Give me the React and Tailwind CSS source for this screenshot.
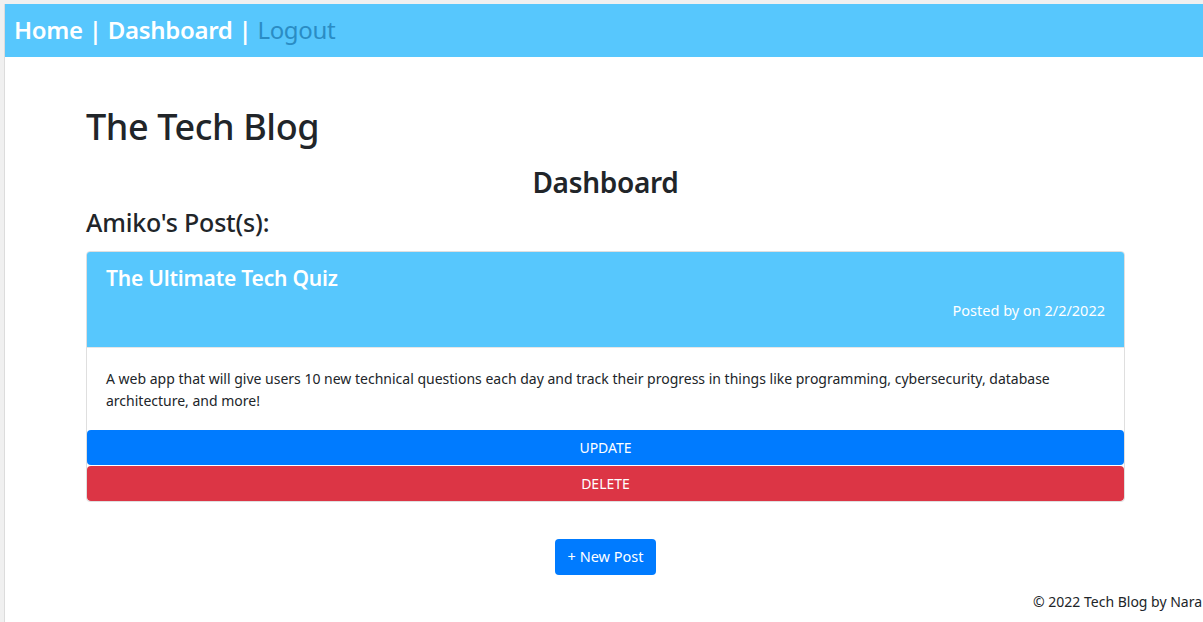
export default function App() {
  return (
    <div className="h-[622px] w-[1203px] overflow-hidden bg-[#f0f0f0] pt-[4px] pl-[4px] font-['Noto_Sans','Open_Sans',sans-serif] text-[#212529]">
      <div className="h-full bg-white border-l border-[#dcdcdc]">
        {/* Top nav */}
        <header className="h-[53px] bg-[#57c7fd] flex items-center pl-[9px] pb-[2px]">
          <nav className="text-[24px] font-semibold text-white leading-none tracking-[-0.3px]">
            <a href="#">Home</a> | <a href="#">Dashboard</a> |{' '}
            <a href="#" className="font-normal text-[#2a8cc4]">Logout</a>
          </nav>
        </header>

        <main className="ml-[81px] w-[1039px]">
          <h1 className="mt-[48px] text-[36px] font-medium leading-[44px] tracking-[-0.4px]">The Tech Blog</h1>
          <h2 className="mt-[15px] text-center text-[28px] font-semibold leading-[36px] tracking-[-0.3px]">Dashboard</h2>
          <h3 className="mt-[7px] text-[25px] font-medium leading-[30px] tracking-[-0.2px]">Amiko's Post(s):</h3>

          {/* Post card */}
          <div className="mt-[14px] border border-[#dfdfdf] rounded-[4px] overflow-hidden">
            <div className="h-[95px] bg-[#57c7fd] px-[19px] pt-[11px] text-white">
              <h4 className="text-[21px] font-semibold leading-[30px] tracking-[-0.2px]">The Ultimate Tech Quiz</h4>
              <p className="mt-[7px] text-right text-[14.5px] leading-[20px]">Posted by on 2/2/2022</p>
            </div>
            <div className="px-[19px] pt-[20px] pb-[18px] text-[14px] leading-[22px] border-t border-[#e6e6e6]">
              A web app that will give users 10 new technical questions each day and track their progress in things like programming, cybersecurity, database architecture, and more!
            </div>
            <button className="block w-full h-[35px] bg-[#007bff] text-white text-[14px] rounded-[4px]">UPDATE</button>
            <button className="block w-full h-[35px] mt-px bg-[#dc3545] text-white text-[14px] rounded-[4px]">DELETE</button>
          </div>

          <div className="mt-[37px] flex justify-center">
            <button className="h-[36px] px-[13px] bg-[#007bff] text-white text-[14.5px] rounded-[4px]">+ New Post</button>
          </div>
        </main>

        <footer className="mt-[17px] pl-[1028px] whitespace-nowrap text-[14px] leading-[20px]">
          © 2022 Tech Blog by Nara
        </footer>
      </div>
    </div>
  )
}
